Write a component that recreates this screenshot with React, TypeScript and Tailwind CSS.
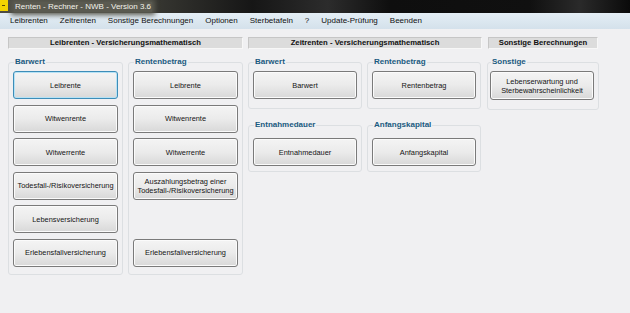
import type { ReactNode } from "react";

const menu = ["Leibrenten", "Zeitrenten", "Sonstige Berechnungen", "Optionen", "Sterbetafeln", "?", "Update-Prüfung", "Beenden"];

function Btn({ children, focused, ghost, tall }: { children?: ReactNode; focused?: boolean; ghost?: boolean; tall?: boolean }) {
  if (ghost) return <div className="h-[28px] w-full" />;
  return (
    <button
      type="button"
      className={`${tall ? "h-[29px]" : "h-[28px]"} w-full flex items-center justify-center text-center rounded-[3px] border bg-linear-to-b from-[#f4f4f4] via-[#ebebeb] to-[#d8d8d8] text-[7.4px] leading-[9px] text-[#141414] ${
        focused ? "border-[#3d8db8] shadow-[inset_0_0_0_1px_#b6e2f5]" : "border-[#7a7a7a] shadow-[inset_0_0_0_1px_#fbfbfb]"
      }`}
    >
      {children}
    </button>
  );
}

function Group({ label, children, className = "" }: { label: string; children: ReactNode; className?: string }) {
  return (
    <fieldset className={`border border-[#dcdfe2] rounded-[3px] min-w-0 ${className}`}>
      <legend className="ml-[1px] px-[1px] text-[8px] leading-[10px] font-bold text-[#1a5a80]">{label}</legend>
      {children}
    </fieldset>
  );
}

function Header({ children }: { children: ReactNode }) {
  return (
    <div className="h-[12px] w-full flex items-center justify-center bg-[#dcdcdc] border-t border-l border-[#c6c6c6] border-b border-r border-b-[#f7f7f7] border-r-[#f7f7f7] text-[7.7px] font-bold text-[#111]">
      {children}
    </div>
  );
}

export default function App() {
  return (
    <div className="w-[630px] h-[313px] overflow-hidden bg-[#f0f0f2] font-['Liberation_Sans',Arial,sans-serif]">
      {/* Titelleiste */}
      <div className="h-[13px] flex items-center bg-[linear-gradient(90deg,#4c4c44_0%,#3c3c36_22%,#161616_40%,#2c2c2c_52%,#0e0e0e_62%,#101010_84%,#2a2a2a_92%,#0a0a0a_100%)]">
        <div className="w-[8px] h-[11px] self-start bg-[#f2d400] relative">
          <div className="absolute left-[2px] top-[5px] w-[3px] h-[1px] bg-[#5a4a00]" />
        </div>
        <span className="ml-[6px] px-[1px] text-[8px] leading-[10px] text-[#f2f2ea] bg-[#5a5a50] shadow-[0_0_5px_3px_#5a5a50]">
          Renten - Rechner - NWB - Version 3.6
        </span>
      </div>

      {/* Menüleiste */}
      <div className="h-[16px] flex items-center gap-[12px] pl-[10px] bg-linear-to-b from-[#e4eef5] to-[#d4e1eb] text-[8px] text-[#111]">
        {menu.map((m) => (
          <span key={m}>{m}</span>
        ))}
      </div>

      <div className="flex gap-[5px] pl-[8px] pt-[8px]">
        {/* Leibrenten */}
        <div className="w-[235px] flex flex-col">
          <Header>Leibrenten - Versicherungsmathematisch</Header>
          <div className="flex gap-[5px] mt-[8px]">
            <Group label="Barwert" className="w-[115px] px-[4px] pt-[4px] pb-[7px]">
              <div className="flex flex-col gap-[5.6px]">
                <Btn focused>Leibrente</Btn>
                <Btn>Witwenrente</Btn>
                <Btn>Witwerrente</Btn>
                <Btn>Todesfall-/Risikoversicherung</Btn>
                <Btn>Lebensversicherung</Btn>
                <Btn>Erlebensfallversicherung</Btn>
              </div>
            </Group>
            <Group label="Rentenbetrag" className="w-[115px] px-[4px] pt-[4px] pb-[7px]">
              <div className="flex flex-col gap-[5.6px]">
                <Btn>Leibrente</Btn>
                <Btn>Witwenrente</Btn>
                <Btn>Witwerrente</Btn>
                <Btn>
                  Auszahlungsbetrag einer
                  <br />
                  Todesfall-/Risikoversicherung
                </Btn>
                <Btn ghost />
                <Btn>Erlebensfallversicherung</Btn>
              </div>
            </Group>
          </div>
        </div>

        {/* Zeitrenten */}
        <div className="w-[234px] flex flex-col">
          <Header>Zeitrenten - Versicherungsmathematisch</Header>
          <div className="flex gap-[5px] mt-[8px]">
            <Group label="Barwert" className="w-[114px] px-[4px] pt-[4px] pb-[9px]">
              <Btn>Barwert</Btn>
            </Group>
            <Group label="Rentenbetrag" className="w-[114px] px-[4px] pt-[4px] pb-[9px]">
              <Btn>Rentenbetrag</Btn>
            </Group>
          </div>
          <div className="flex gap-[5px] mt-[11px]">
            <Group label="Entnahmedauer" className="w-[114px] px-[4px] pt-[8px] pb-[5px]">
              <Btn>Entnahmedauer</Btn>
            </Group>
            <Group label="Anfangskapital" className="w-[114px] px-[4px] pt-[8px] pb-[5px]">
              <Btn>Anfangskapital</Btn>
            </Group>
          </div>
        </div>

        {/* Sonstige */}
        <div className="w-[112px] flex flex-col">
          <div className="px-[1px]">
            <Header>Sonstige Berechnungen</Header>
          </div>
          <div className="mt-[8px]">
            <Group label="Sonstige" className="w-[112px] pl-[2px] pr-[4px] pt-[4px] pb-[9px]">
              <Btn tall>
                Lebenserwartung und
                <br />
                Sterbewahrscheinlichkeit
              </Btn>
            </Group>
          </div>
        </div>
      </div>
    </div>
  );
}
